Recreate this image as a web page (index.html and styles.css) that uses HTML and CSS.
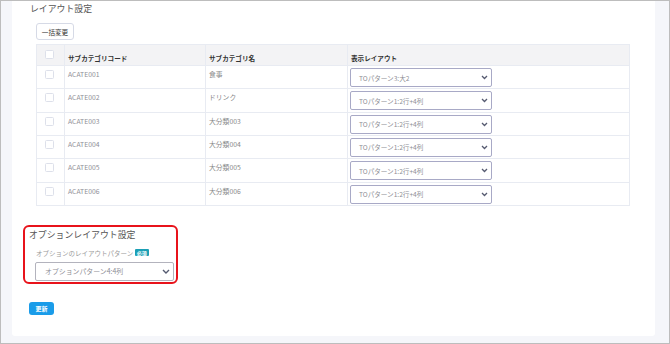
FILE: index.html
```html
<!DOCTYPE html>
<html lang="ja">

<head>
    <meta charset="UTF-8">
    <title>レイアウト設定</title>
    <link rel="stylesheet" href="styles.css">
</head>

<body>
    <div class="frame">
        <div class="card">
            <h2 class="section-title">レイアウト設定</h2>

            <div class="layout-block">
                <button class="btn-outline">一括変更</button>

                <table class="grid">
                    <colgroup>
                        <col class="col-check">
                        <col class="col-code">
                        <col class="col-name">
                        <col>
                    </colgroup>
                    <thead>
                        <tr>
                            <th><span class="check"></span></th>
                            <th>サブカテゴリコード</th>
                            <th>サブカテゴリ名</th>
                            <th>表示レイアウト</th>
                        </tr>
                    </thead>
                    <tbody>
                        <tr>
                            <td><span class="check"></span></td>
                            <td>ACATE001</td>
                            <td>食事</td>
                            <td>
                                <div class="select">
                                    <span>TOパターン3:大2</span>
                                    <svg width="7" height="5" viewBox="0 0 7 5"><path d="M1 1l2.5 2.5L6 1" fill="none" stroke="#555a70" stroke-width="1.3"/></svg>
                                </div>
                            </td>
                        </tr>
                        <tr>
                            <td><span class="check"></span></td>
                            <td>ACATE002</td>
                            <td>ドリンク</td>
                            <td>
                                <div class="select">
                                    <span>TOパターン1:2行+4列</span>
                                    <svg width="7" height="5" viewBox="0 0 7 5"><path d="M1 1l2.5 2.5L6 1" fill="none" stroke="#555a70" stroke-width="1.3"/></svg>
                                </div>
                            </td>
                        </tr>
                        <tr>
                            <td><span class="check"></span></td>
                            <td>ACATE003</td>
                            <td>大分類003</td>
                            <td>
                                <div class="select">
                                    <span>TOパターン1:2行+4列</span>
                                    <svg width="7" height="5" viewBox="0 0 7 5"><path d="M1 1l2.5 2.5L6 1" fill="none" stroke="#555a70" stroke-width="1.3"/></svg>
                                </div>
                            </td>
                        </tr>
                        <tr>
                            <td><span class="check"></span></td>
                            <td>ACATE004</td>
                            <td>大分類004</td>
                            <td>
                                <div class="select">
                                    <span>TOパターン1:2行+4列</span>
                                    <svg width="7" height="5" viewBox="0 0 7 5"><path d="M1 1l2.5 2.5L6 1" fill="none" stroke="#555a70" stroke-width="1.3"/></svg>
                                </div>
                            </td>
                        </tr>
                        <tr>
                            <td><span class="check"></span></td>
                            <td>ACATE005</td>
                            <td>大分類005</td>
                            <td>
                                <div class="select">
                                    <span>TOパターン1:2行+4列</span>
                                    <svg width="7" height="5" viewBox="0 0 7 5"><path d="M1 1l2.5 2.5L6 1" fill="none" stroke="#555a70" stroke-width="1.3"/></svg>
                                </div>
                            </td>
                        </tr>
                        <tr>
                            <td><span class="check"></span></td>
                            <td>ACATE006</td>
                            <td>大分類006</td>
                            <td>
                                <div class="select">
                                    <span>TOパターン1:2行+4列</span>
                                    <svg width="7" height="5" viewBox="0 0 7 5"><path d="M1 1l2.5 2.5L6 1" fill="none" stroke="#555a70" stroke-width="1.3"/></svg>
                                </div>
                            </td>
                        </tr>
                    </tbody>
                </table>
            </div>

            <!-- option layout -->
            <div class="option-box">
                <h2 class="section-title">オプションレイアウト設定</h2>
                <div class="field-label">オプションのレイアウトパターン <span class="badge">必須</span></div>
                <div class="select select-wide">
                    <span>オプションパターン4:4列</span>
                    <svg width="8" height="5" viewBox="0 0 8 5"><path d="M1 1l3 3 3-3" fill="none" stroke="#555a70" stroke-width="1.4"/></svg>
                </div>
            </div>

            <button class="btn-primary">更新</button>
        </div>
    </div>
</body>

</html>
```

FILE: styles.css
```css
* {
    box-sizing: border-box;
}

body {
    margin: 0;
    background-color: #f5f6fa;
    font-family: "Noto Sans CJK JP", "Noto Sans", sans-serif;
    overflow: hidden;
}

.frame {
    height: 344px;
    border: 1px solid #bdbdbd;
    padding: 0 14px 7px 11px;
    display: flex;
    flex-direction: column;
}

.card {
    flex: 1;
    background: white;
    border-radius: 0 0 3px 3px;
    padding: 2px 0 0 18px;
}

.section-title {
    margin: 0;
    font-size: 8.9px;
    line-height: 12px;
    font-weight: normal;
    color: #555;
}

.layout-block {
    margin-left: 6px;
}

.btn-outline {
    display: block;
    margin-top: 8px;
    width: 38px;
    height: 17px;
    padding: 0;
    background: white;
    border: 1px solid #d6dae6;
    border-radius: 3px;
    font-family: inherit;
    font-size: 6.6px;
    color: #333;
}

.grid {
    margin-top: 4px;
    width: 594px;
    border-collapse: collapse;
    table-layout: fixed;
    font-size: 6.8px;
    color: #8e8e95;
}

.col-check {
    width: 28px;
}

.col-code {
    width: 141px;
}

.col-name {
    width: 142px;
}

.grid th,
.grid td {
    border: 1px solid #e8ebf2;
    text-align: left;
    vertical-align: top;
    padding: 0 3px;
    line-height: 10px;
}

.grid th {
    height: 21px;
    background: #f3f3f5;
    color: #333;
    font-weight: bold;
    font-size: 6.6px;
    padding-top: 8px;
}

.grid td {
    height: 23.33px;
    padding-top: 3px;
}

.grid td:nth-child(3) {
    color: #888;
}

.grid th:first-child,
.grid td:first-child {
    padding: 4px 0 0 8px;
}

.grid th:first-child {
    padding-top: 5px;
}

.check {
    display: block;
    width: 9px;
    height: 9px;
    border: 1px solid #dde0ea;
    border-radius: 1.5px;
    background: white;
}

.grid td:last-child {
    padding: 2px 0 0 2px;
}

.select {
    display: flex;
    align-items: center;
    justify-content: space-between;
    width: 142px;
    height: 19px;
    padding: 0 3px 0 8px;
    border: 1px solid #a8a9c6;
    border-radius: 2px;
    background: white;
    font-size: 6.6px;
    color: #8e8e95;
}

.option-box {
    margin: 19px 0 0 -7px;
    width: 155px;
    border: 2px solid #e8131b;
    border-radius: 6px;
    padding: 2px 2px 1px 4px;
}

.field-label {
    margin: 7px 0 0 7px;
    font-size: 6.5px;
    line-height: 10px;
    color: #999;
}

.badge {
    display: inline-block;
    background: #1b9fb5;
    color: white;
    font-weight: bold;
    font-size: 5px;
    line-height: 7px;
    padding: 0 2px;
    border-radius: 1px;
    vertical-align: 1px;
}

.select-wide {
    margin: 4px 0 0 6px;
    width: 139px;
    border-color: #b3b3bd;
    padding-left: 9px;
    font-size: 6.9px;
}

.btn-primary {
    display: block;
    margin: 18px 0 0 -1px;
    width: 25px;
    height: 13px;
    padding: 0;
    background: #1a9ce9;
    border: none;
    border-radius: 3px;
    color: white;
    font-family: inherit;
    font-weight: bold;
    font-size: 6px;
}
```
